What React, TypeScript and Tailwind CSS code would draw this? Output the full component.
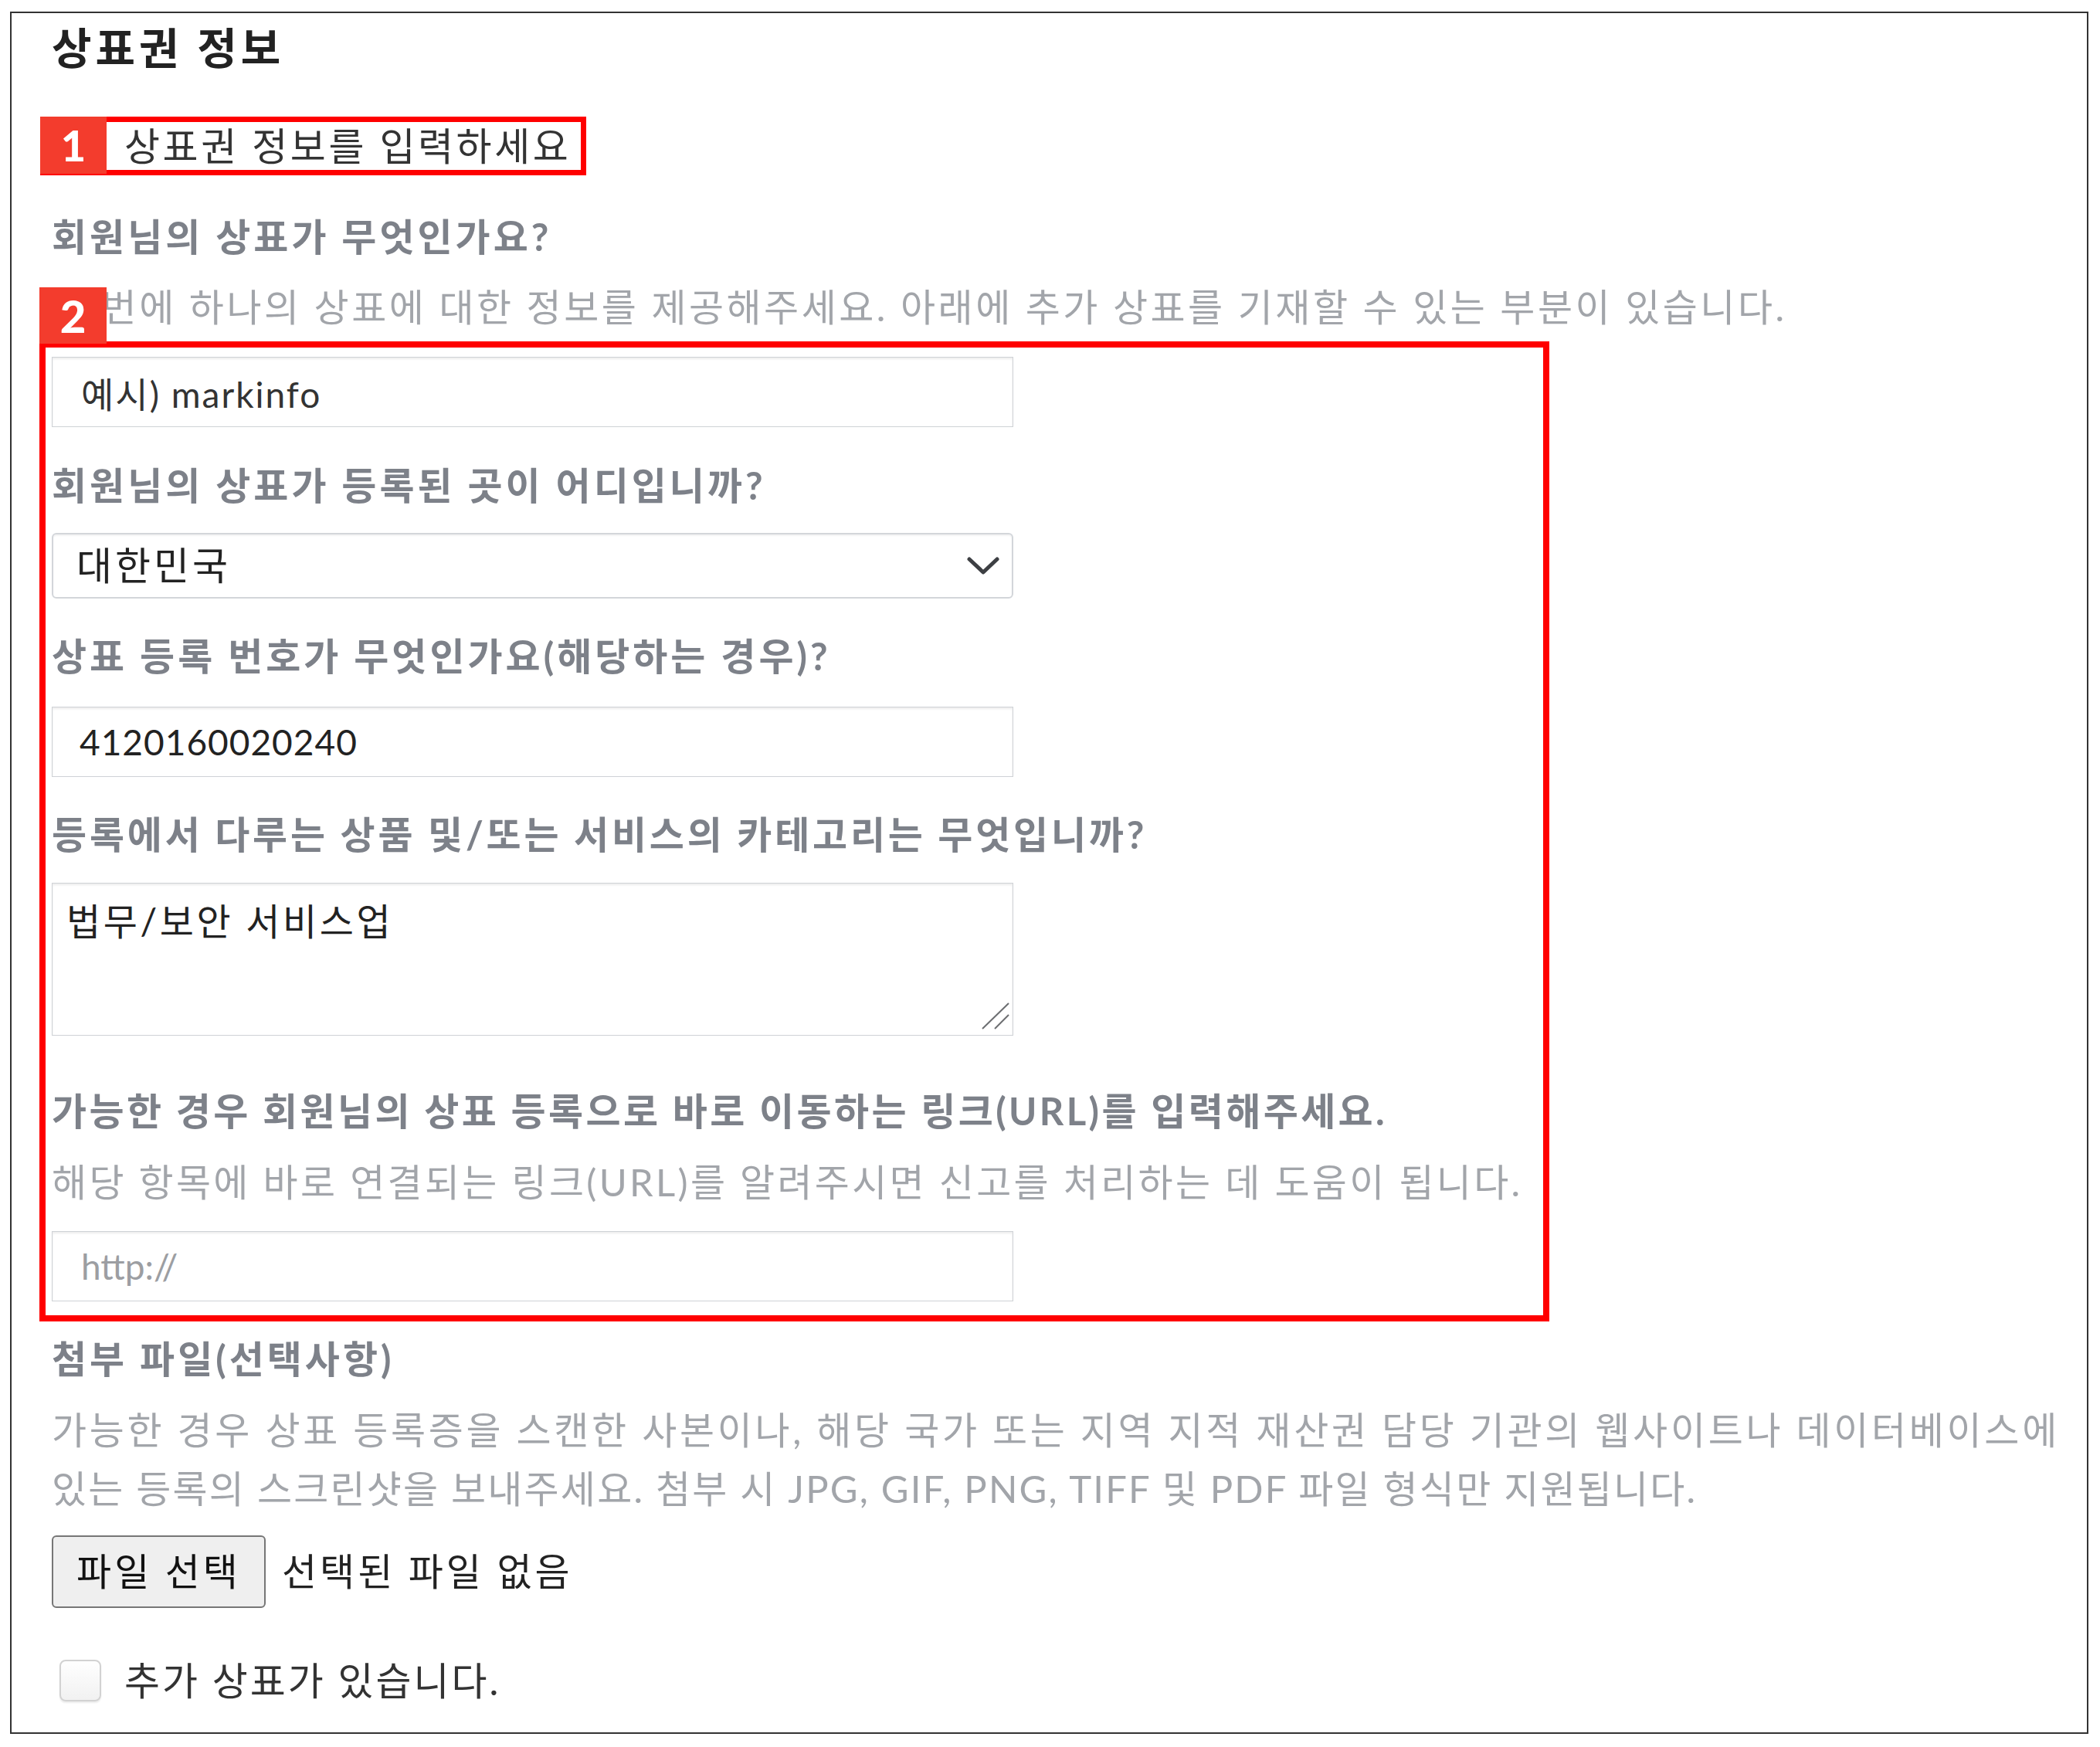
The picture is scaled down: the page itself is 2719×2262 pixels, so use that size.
export default function App() {
  return (
    <div className="min-h-[2262px] bg-white pl-[13px] pt-[15px] font-['Lato','Noto_Sans_CJK_KR',sans-serif]">
      <div className="h-[2230px] w-[2691px] border-2 border-[#333] pl-[52px]">
        <h2 className="mt-[15px] h-[60px] text-[56px] font-bold leading-[60px] tracking-[5px] text-[#222]">
          상표권 정보
        </h2>

        {/* annotation 1 */}
        <div className="relative ml-[-15px] mt-[59px] flex h-[76px] w-[707px] items-center border-[7px] border-[#ff0000] pl-[102px]">
          <span className="absolute -left-[7px] -top-[7px] flex h-[74px] w-[86px] items-center justify-center bg-[#f33c2d] text-[56px] font-black leading-none text-white">
            1
          </span>
          <span className="text-[50px] leading-[62px] tracking-[3.6px] text-[#333]">상표권 정보를 입력하세요</span>
        </div>

        <p className="mt-[49px] h-[60px] text-[49px] font-bold leading-[60px] tracking-[4px] text-[#7d8189]">
          회원님의 상표가 무엇인가요?
        </p>
        <p className="mt-[31px] h-[60px] whitespace-nowrap text-[49px] leading-[60px] tracking-[3.5px] text-[#a2a5aa]">
          한 번에 하나의 상표에 대한 정보를 제공해주세요. 아래에 추가 상표를 기재할 수 있는 부분이 있습니다.
        </p>

        {/* annotation 2 */}
        <div className="relative ml-[-16px] mt-[15px] w-[1955px] border-[8px] border-[#ff0000] pb-[18px] pl-[8px] pt-[12px]">
          <span className="absolute -left-[8px] -top-[78px] flex h-[73px] w-[87px] items-center justify-center bg-[#f33c2d] text-[58px] font-black leading-none text-white">
            2
          </span>

          <input
            readOnly
            value="예시) markinfo"
            className="block h-[91px] w-[1245px] border border-[#cfd2d6] bg-white pl-[37px] text-[46px] tracking-[2px] text-[#333] shadow-[inset_0_2px_3px_rgba(0,0,0,0.08)] outline-none"
          />

          <p className="mt-[45px] h-[60px] text-[49px] font-bold leading-[60px] tracking-[4px] text-[#7d8189]">
            회원님의 상표가 등록된 곳이 어디입니까?
          </p>
          <div className="mt-[32px] flex h-[85px] w-[1245px] items-center justify-between rounded-[6px] border-2 border-[#d3d6da] bg-white pl-[30px] pr-[16px] shadow-[inset_0_2px_2px_rgba(0,0,0,0.05)]">
            <span className="text-[50px] tracking-[4px] text-[#222]">대한민국</span>
            <svg width="42" height="24" viewBox="0 0 42 24" fill="none">
              <polyline
                points="3,3 21,20 39,3"
                stroke="#3d3f43"
                strokeWidth="5"
                strokeLinecap="round"
                strokeLinejoin="round"
              />
            </svg>
          </div>

          <p className="mt-[44px] h-[60px] text-[49px] font-bold leading-[60px] tracking-[4px] text-[#7d8189]">
            상표 등록 번호가 무엇인가요(해당하는 경우)?
          </p>
          <input
            readOnly
            value="4120160020240"
            className="mt-[36px] block h-[91px] w-[1245px] border border-[#cfd2d6] bg-white pl-[35px] text-[46px] tracking-[1px] text-[#222] shadow-[inset_0_2px_3px_rgba(0,0,0,0.08)] outline-none"
          />

          <p className="mt-[44px] h-[60px] text-[49px] font-bold leading-[60px] tracking-[3.8px] text-[#7d8189]">
            등록에서 다루는 상품 및/또는 서비스의 카테고리는 무엇입니까?
          </p>
          <div className="relative mt-[33px] h-[198px] w-[1245px]">
            <textarea
              readOnly
              value="법무/보안 서비스업"
              className="block h-full w-full resize-none border border-[#cfd2d6] bg-white pl-[18px] pt-[19px] text-[48px] leading-[60px] tracking-[3.6px] text-[#222] shadow-[inset_0_2px_3px_rgba(0,0,0,0.08)] outline-none"
            />
            <svg
              className="absolute bottom-[7px] right-[4px]"
              width="38"
              height="36"
              viewBox="0 0 38 36"
              fill="none"
            >
              <line x1="36" y1="1" x2="2" y2="34" stroke="#6b6d70" strokeWidth="2" />
              <line x1="36" y1="16" x2="18" y2="34" stroke="#6b6d70" strokeWidth="2" />
            </svg>
          </div>

          <p className="mt-[67px] h-[60px] text-[49px] font-bold leading-[60px] tracking-[3.4px] text-[#7d8189]">
            가능한 경우 회원님의 상표 등록으로 바로 이동하는 링크(URL)를 입력해주세요.
          </p>
          <p className="mt-[32px] h-[60px] text-[49px] leading-[60px] tracking-[3.3px] text-[#a2a5aa]">
            해당 항목에 바로 연결되는 링크(URL)를 알려주시면 신고를 처리하는 데 도움이 됩니다.
          </p>
          <input
            readOnly
            placeholder="http://"
            className="mt-[34px] block h-[91px] w-[1245px] border border-[#cfd2d6] bg-white pl-[37px] text-[46px] text-[#222] shadow-[inset_0_2px_3px_rgba(0,0,0,0.08)] outline-none placeholder:text-[#9c9ea2]"
          />
        </div>

        <p className="mt-[18px] h-[60px] text-[49px] font-bold leading-[60px] tracking-[4px] text-[#7d8189]">
          첨부 파일(선택사항)
        </p>
        <p className="mt-[24px] whitespace-nowrap text-[49px] leading-[76px] text-[#a2a5aa]">
          <span className="tracking-[3.7px]">
            가능한 경우 상표 등록증을 스캔한 사본이나, 해당 국가 또는 지역 지적 재산권 담당 기관의 웹사이트나 데이터베이스에
          </span>
          <br />
          <span className="tracking-[2.2px]">
            있는 등록의 스크린샷을 보내주세요. 첨부 시 JPG, GIF, PNG, TIFF 및 PDF 파일 형식만 지원됩니다.
          </span>
        </p>

        <div className="mt-[23px] flex items-center">
          <button className="h-[94px] w-[277px] rounded-[6px] border-2 border-[#767676] bg-[#efefef] text-[49px] tracking-[4px] text-[#111]">
            파일 선택
          </button>
          <span className="ml-[21px] text-[49px] tracking-[4px] text-[#222]">선택된 파일 없음</span>
        </div>

        <div className="mt-[64px] flex h-[60px] items-center">
          <span className="ml-[10px] h-[54px] w-[54px] rounded-[8px] border-2 border-[#d2d2d2] bg-gradient-to-b from-white to-[#f1f1f1] shadow-[0_2px_2px_rgba(0,0,0,0.08)]" />
          <span className="ml-[30px] text-[50px] leading-[60px] tracking-[3px] text-[#333]">추가 상표가 있습니다.</span>
        </div>
      </div>
    </div>
  );
}
